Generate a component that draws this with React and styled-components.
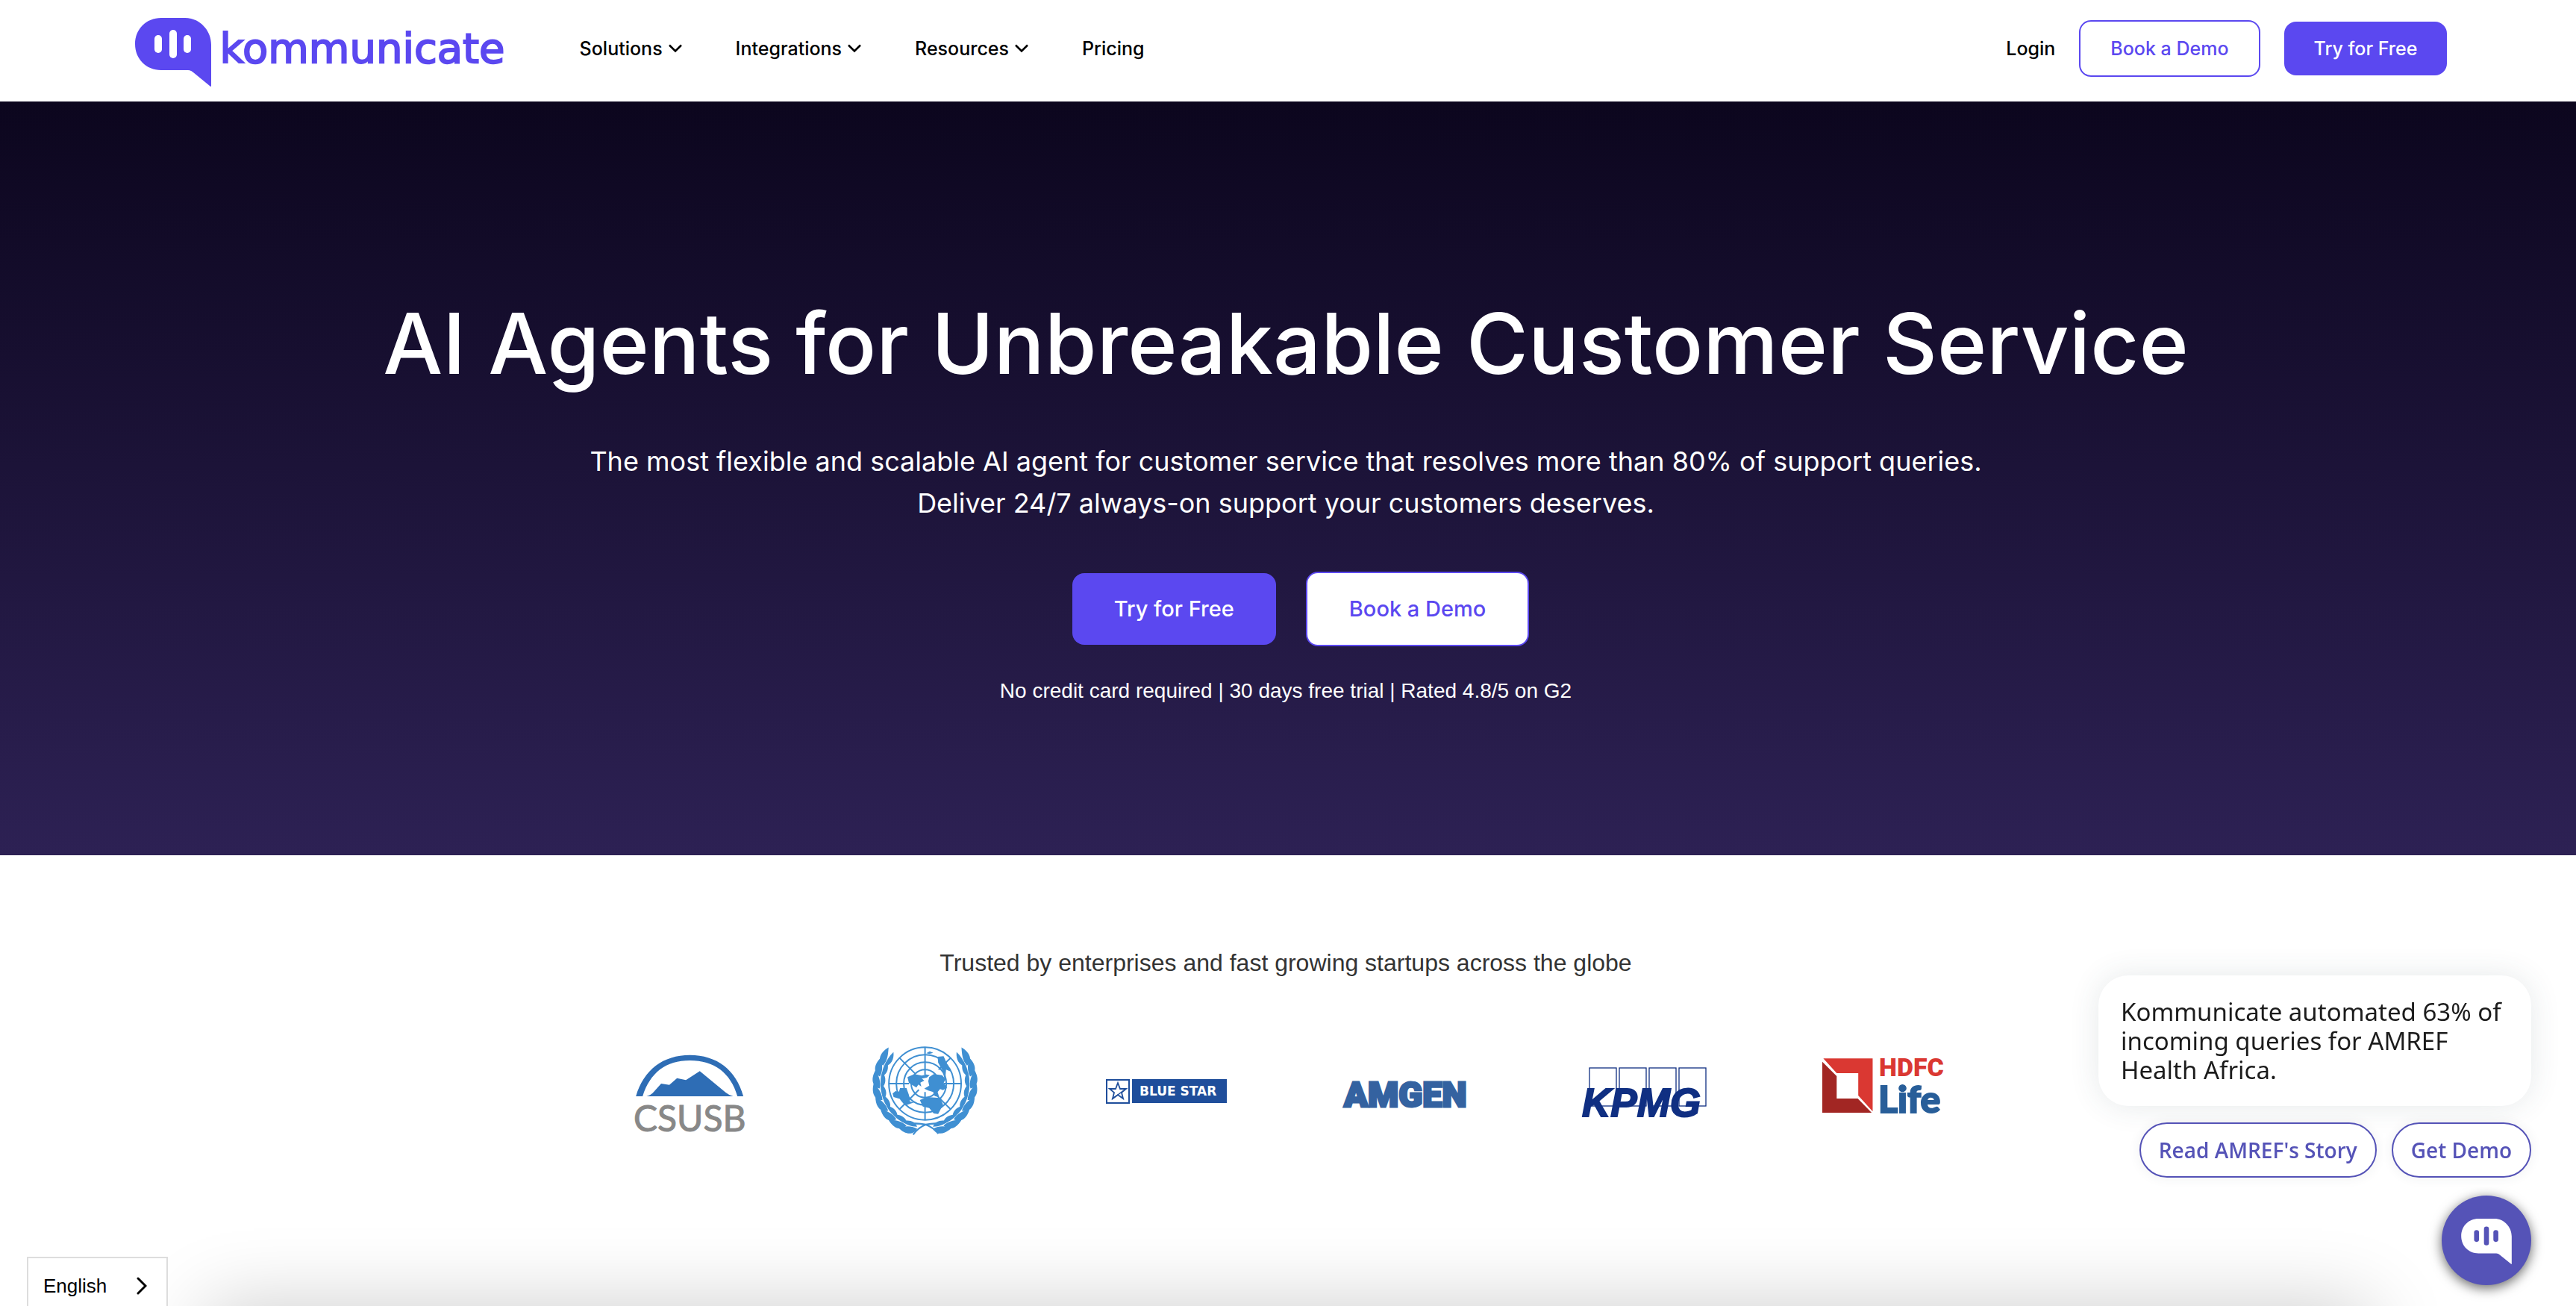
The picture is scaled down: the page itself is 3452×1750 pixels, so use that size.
// Kommunicate landing page
import React from 'react';
import styled, { createGlobalStyle } from 'styled-components';

const PURPLE = '#5b48f0';
const WIDGET = '#5553b7';

const GlobalStyle = createGlobalStyle`
	* {
		box-sizing: border-box;
	}

	body {
		margin: 0;
		background: #fff;
		color: #000;
		font-family: Inter, 'Liberation Sans', sans-serif;
	}

	button {
		font-family: inherit;
		cursor: pointer;
	}

	a {
		color: inherit;
		text-decoration: none;
	}
`;

const Page = styled.div`
	height: 100vh;
	overflow: hidden;
`;

const HeaderBar = styled.header`
	display: flex;
	align-items: center;
	height: 136px;
	padding: 0 5% 6px;
`;

const Brand = styled.a`
	display: flex;
	align-items: center;
	gap: 12px;
	width: 604px;
	padding-left: 8px;
	color: ${PURPLE};
`;

const BrandMark = styled.svg`
	width: 102px;
	height: 92px;
	margin-top: 10px;
`;

const BrandName = styled.span`
	font-family: 'DejaVu Sans', sans-serif;
	font-size: 56px;
	line-height: 64px;
	-webkit-text-stroke: 2px ${PURPLE};
`;

const Nav = styled.nav`
	display: flex;
	gap: 72px;
	flex: 1;
`;

const NavButton = styled.button`
	display: flex;
	align-items: center;
	gap: 8px;
	padding: 0;
	border: 0;
	background: none;
	color: #000;
	font-size: 25px;
	font-weight: 500;
	line-height: 40px;
`;

const NavLink = styled.a`
	font-size: 25px;
	font-weight: 500;
	line-height: 40px;
`;

const Actions = styled.div`
	display: flex;
	align-items: center;
	gap: 32px;
`;

const Button = styled.a`
	display: block;
	padding: ${(props) => (props.$large ? '24px 56px' : '16px 40px')};
	border: ${(props) => (props.$outline ? `2px solid ${PURPLE}` : '0')};
	border-radius: 16px;
	background: ${(props) => (props.$outline ? '#fff' : PURPLE)};
	color: ${(props) => (props.$outline ? PURPLE : '#fff')};
	font-size: ${(props) => (props.$large ? 29 : 25)}px;
	font-weight: 500;
	line-height: ${(props) => (props.$large ? 48 : 40)}px;
`;

const HeroSection = styled.section`
	padding: 252px 46px 200px 40px;
	background: linear-gradient(#0c061e, #2d2154);
	color: #fff;
	text-align: center;
`;

const HeroTitle = styled.h1`
	margin: 0 0 58px;
	font-size: 113px;
	font-weight: 500;
	line-height: 144px;
`;

const HeroText = styled.p`
	margin: 0 0 64px;
	font-size: 36px;
	line-height: 56px;
`;

const HeroButtons = styled.div`
	display: flex;
	align-items: center;
	justify-content: center;
	gap: 40px;
	padding-left: 40px;
`;

const HeroNote = styled.p`
	margin: 40px 0 0;
	font-family: 'Liberation Sans', sans-serif;
	font-size: 28px;
	line-height: 40px;
`;

const TrustedSection = styled.section`
	padding: 120px 0 228px;
`;

const TrustedTitle = styled.p`
	margin: 0 6px 88px 0;
	color: #333;
	font-family: 'Liberation Sans', sans-serif;
	font-size: 32px;
	line-height: 48px;
	text-align: center;
`;

const LogoList = styled.ul`
	display: grid;
	grid-template-columns: repeat(6, 1fr);
	max-width: 1920px;
	margin: 0 auto;
	padding: 0;
	list-style: none;
	justify-items: center;
`;

const LogoSvg = styled.svg`
	display: block;
	width: 170px;
	height: 120px;
	overflow: visible;
`;

const NextPanel = styled.section`
	height: 400px;
	margin: 0 8%;
	background: #fff;
	box-shadow: 0 0 100px rgba(0, 0, 0, 0.2);
`;

const Widget = styled.aside`
	position: fixed;
	right: 60px;
	bottom: 28px;
	display: flex;
	flex-direction: column;
	align-items: flex-end;
	font-family: 'Noto Sans', 'Open Sans', sans-serif;
`;

const WidgetMessage = styled.p`
	width: 580px;
	margin: 0 0 22px;
	padding: 29px 30px;
	border-radius: 40px;
	background: #fff;
	box-shadow: 0 0 40px rgba(50, 70, 80, 0.12);
	color: #1c1c1c;
	font-size: 33px;
	line-height: 39px;
`;

const WidgetActions = styled.div`
	display: flex;
	gap: 20px;
	margin-bottom: 24px;
`;

const WidgetButton = styled.button`
	padding: 16px 24px;
	border: 2px solid ${WIDGET};
	border-radius: 38px;
	background: #fff;
	box-shadow: 0 0 16px rgba(50, 70, 80, 0.08);
	color: ${WIDGET};
	font-family: 'Open Sans', 'Noto Sans', sans-serif;
	font-size: 28px;
	font-weight: 600;
	line-height: 38px;
`;

const ChatButton = styled.button`
	display: flex;
	align-items: center;
	justify-content: center;
	width: 120px;
	height: 120px;
	padding: 3px 0 0;
	border: 0;
	border-radius: 50%;
	background: ${WIDGET};
	box-shadow: 0 4px 16px rgba(0, 0, 0, 0.6);
`;

const ChatMark = styled.svg`
	width: 68px;
	height: 61px;
`;

const LanguageButton = styled.button`
	position: fixed;
	left: 36px;
	bottom: 0;
	display: flex;
	justify-content: space-between;
	align-items: center;
	width: 189px;
	height: 66px;
	padding: 10px 26px 0 20px;
	border: 2px solid #ddd;
	border-bottom: 0;
	background: #fff;
	color: #000;
	font-family: 'Liberation Sans', sans-serif;
	font-size: 26px;
`;

const BubbleShape = ({ fill, bars }) => (
	<>
		<path
			d="M35 0H67C86 0 102 16 102 36V91Q102 93 100 91L78 73Q75 70 71 70H35C15 70 0 55 0 35S15 0 35 0Z"
			fill={fill}
		/>
		<rect x="26" y="23" width="10" height="24" rx="5" fill={bars} />
		<rect x="46" y="16" width="10" height="38" rx="5" fill={bars} />
		<rect x="65" y="23" width="10" height="24" rx="5" fill={bars} />
	</>
);

const Chevron = () => (
	<svg width="18" height="12" viewBox="0 0 18 12" fill="none" stroke="#000" strokeWidth="2.6">
		<path d="M1 1.5L9 9.5L17 1.5" />
	</svg>
);

const CsusbLogo = () => (
	<LogoSvg viewBox="0 0 170 120" role="img" aria-label="CSUSB">
		<g transform="translate(-21 -22) scale(.3317 .3333)" fill="#2e6db5">
			<path d="M97 267C128 160 207 101 315 101S502 160 531 267H507C480 172 412 123 315 123S154 172 124 267Z" />
			<path d="M140 267Q158 263 172 246L199 216L232 221L263 194L299 202L355 166L460 252Q472 262 490 267Z" />
		</g>
		<text x="8" y="114" fill="#888" stroke="#888" fontFamily="Lato" fontSize="48">CSUSB</text>
	</LogoSvg>
);

const LEAF_ANGLES = [103, 117, 132, 147, 162, 177, 192, 206];

// one half of the olive wreath, the other half is mirrored
const Wreath = () => (
	<g>
		{LEAF_ANGLES.map((angle) => (
			<g key={angle} transform={`rotate(${angle} 1265 216) translate(1445 216)`}>
				<path d="M4 -10C36 0 38 34 16 66C6 40 -4 20 4 -10Z" />
				<path d="M-4 -8C-24 6 -26 32 -10 58C-2 36 2 16 -4 -8Z" />
			</g>
		))}
	</g>
);

const UnLogo = () => (
	<LogoSvg viewBox="0 0 170 120" role="img" aria-label="United Nations">
		<g transform="translate(-341 -22) scale(.3317 .3333)" fill="#3f8fd2">
			<g fill="none" stroke="#3f8fd2" strokeWidth="6">
				<circle cx="1265" cy="216" r="146" />
				<circle cx="1265" cy="216" r="116" />
				<circle cx="1265" cy="216" r="86" />
				<circle cx="1265" cy="216" r="56" />
				<path d="M1265 70V180M1265 250V362M1119 216H1200M1340 216H1411M1162 113L1225 176M1368 113L1320 160M1162 319L1240 241M1368 319L1300 251" />
				<path d="M1217 421Q1238 392 1268 381Q1300 374 1330 378M1319 417Q1298 392 1268 381Q1236 374 1202 378" strokeWidth="7" />
			</g>
			<path d="M1194 190L1222 178L1252 184L1270 179L1284 182L1272 192L1252 196L1262 204L1246 212L1250 228L1238 220L1230 232L1214 222L1200 214Z" />
			<path d="M1282 190L1300 178L1334 182L1348 198L1340 214L1354 232L1338 242L1326 238L1316 250L1322 270L1304 266L1298 250L1278 244L1262 236L1282 224L1278 206Z" />
			<path d="M1134 256L1146 246L1160 248L1164 234L1190 234L1200 262L1204 288L1220 292L1190 302L1166 278L1138 270Z" />
			<path d="M1244 282L1274 270L1326 274L1338 300L1318 338L1300 336L1282 314L1256 308Z" />
			<path d="M1316 108L1340 106L1352 132L1370 168L1350 160L1346 206L1336 164L1318 132Z" />
			<path d="M1270 94L1284 86L1298 92L1282 97Z" />
			<Wreath />
			<g transform="translate(2530 0) scale(-1 1)">
				<Wreath />
			</g>
		</g>
	</LogoSvg>
);

const BlueStarLogo = () => (
	<LogoSvg viewBox="0 0 170 120" role="img" aria-label="Blue Star">
		<rect x="2" y="45" width="30" height="31" fill="#fff" stroke="#1f4e9b" strokeWidth="2" />
		<rect x="36" y="44" width="127" height="32" fill="#1f4e9b" />
		<path
			d="M17 49L20 57H28L22 62L24 70L17 65L10 70L12 62L6 57H14Z"
			fill="none"
			stroke="#1f4e9b"
			strokeWidth="1.8"
		/>
		<path d="M9 71L25 59" stroke="#1f4e9b" strokeWidth="1.5" />
		<text x="46" y="66" fill="#fff" fontFamily="DejaVu Sans" fontWeight="700" fontSize="17">BLUE STAR</text>
	</LogoSvg>
);

const AmgenLogo = () => (
	<LogoSvg viewBox="0 0 170 120" role="img" aria-label="Amgen">
		<text x="0" y="81" fill="#3462a0" stroke="#3462a0" strokeWidth="3" fontFamily="Roboto" fontWeight="900" fontSize="47">AMGEN</text>
	</LogoSvg>
);

const KpmgLogo = () => (
	<LogoSvg viewBox="0 0 170 120" role="img" aria-label="KPMG">
		<g fill="#fff" stroke="#102f82" strokeWidth="1.3">
			<rect x="9" y="29" width="36" height="51" />
			<rect x="49" y="29" width="36" height="51" />
			<rect x="89" y="29" width="36" height="51" />
			<rect x="129" y="29" width="36" height="51" />
		</g>
		<text x="-1" y="94" fill="#102f82" stroke="#102f82" strokeWidth="2" fontFamily="Liberation Sans" fontStyle="italic" fontWeight="700" fontSize="53">KPMG</text>
	</LogoSvg>
);

const HdfcLogo = () => (
	<LogoSvg viewBox="0 0 170 120" role="img" aria-label="HDFC Life">
		<g transform="translate(-351 -22) scale(.3444 .3333)">
			<path d="M1026 115H1218V328L1162 264V174H1078Z" fill="#da3832" />
			<path d="M1022 128L1078 186V276H1160L1214 333H1022Z" fill="#a22623" />
		</g>
		<text x="77" y="40" fill="#da3832" fontFamily="Roboto" fontWeight="900" fontSize="34">HDFC</text>
		<text x="76" y="89" fill="#285e99" stroke="#285e99" strokeWidth="2" fontFamily="Lato" fontWeight="900" fontSize="50">Life</text>
	</LogoSvg>
);

const logos = [
	{ id: 'csusb', Logo: CsusbLogo },
	{ id: 'un', Logo: UnLogo },
	{ id: 'bluestar', Logo: BlueStarLogo },
	{ id: 'amgen', Logo: AmgenLogo },
	{ id: 'kpmg', Logo: KpmgLogo },
	{ id: 'hdfc', Logo: HdfcLogo },
];

const menus = ['Solutions', 'Integrations', 'Resources'];

const Header = () => (
	<HeaderBar>
		<Brand href="#home">
			<BrandMark viewBox="0 0 102 92" aria-hidden="true">
				<BubbleShape fill={PURPLE} bars="#fff" />
			</BrandMark>
			<BrandName>kommunicate</BrandName>
		</Brand>
		<Nav>
			{menus.map((title) => (
				<NavButton key={title} type="button" aria-haspopup="true">
					{title}
					<Chevron />
				</NavButton>
			))}
			<NavLink href="#pricing">Pricing</NavLink>
		</Nav>
		<Actions>
			<NavLink href="#login">Login</NavLink>
			<Button href="#demo" $outline>Book a Demo</Button>
			<Button href="#signup">Try for Free</Button>
		</Actions>
	</HeaderBar>
);

const Hero = () => (
	<HeroSection>
		<HeroTitle>AI Agents for Unbreakable Customer Service</HeroTitle>
		<HeroText>
			The most flexible and scalable AI agent for customer service that resolves more than 80% of support queries.
			<br />
			Deliver 24/7 always-on support your customers deserves.
		</HeroText>
		<HeroButtons>
			<Button href="#signup" $large>Try for Free</Button>
			<Button href="#demo" $large $outline>Book a Demo</Button>
		</HeroButtons>
		<HeroNote>No credit card required | 30 days free trial | Rated 4.8/5 on G2</HeroNote>
	</HeroSection>
);

const Trusted = () => (
	<TrustedSection>
		<TrustedTitle>Trusted by enterprises and fast growing startups across the globe</TrustedTitle>
		<LogoList>
			{logos.map(({ id, Logo }) => (
				<li key={id}>
					<Logo />
				</li>
			))}
		</LogoList>
	</TrustedSection>
);

const ChatWidget = () => (
	<Widget>
		<WidgetMessage>Kommunicate automated 63% of incoming queries for AMREF Health Africa.</WidgetMessage>
		<WidgetActions>
			<WidgetButton type="button">Read AMREF's Story</WidgetButton>
			<WidgetButton type="button">Get Demo</WidgetButton>
		</WidgetActions>
		<ChatButton type="button" aria-label="Open chat">
			<ChatMark viewBox="0 0 102 92" aria-hidden="true">
				<BubbleShape fill="#fff" bars={WIDGET} />
			</ChatMark>
		</ChatButton>
	</Widget>
);

// Main Component
const App = () => (
	<Page>
		<GlobalStyle />
		<Header />
		<main>
			<Hero />
			<Trusted />
			<NextPanel />
		</main>
		<ChatWidget />
		<LanguageButton type="button">
			English
			<svg width="14" height="24" viewBox="0 0 14 24" fill="none" stroke="#000" strokeWidth="3" strokeLinecap="round">
				<path d="M2 2L12 12L2 22" />
			</svg>
		</LanguageButton>
	</Page>
);

export default App;
